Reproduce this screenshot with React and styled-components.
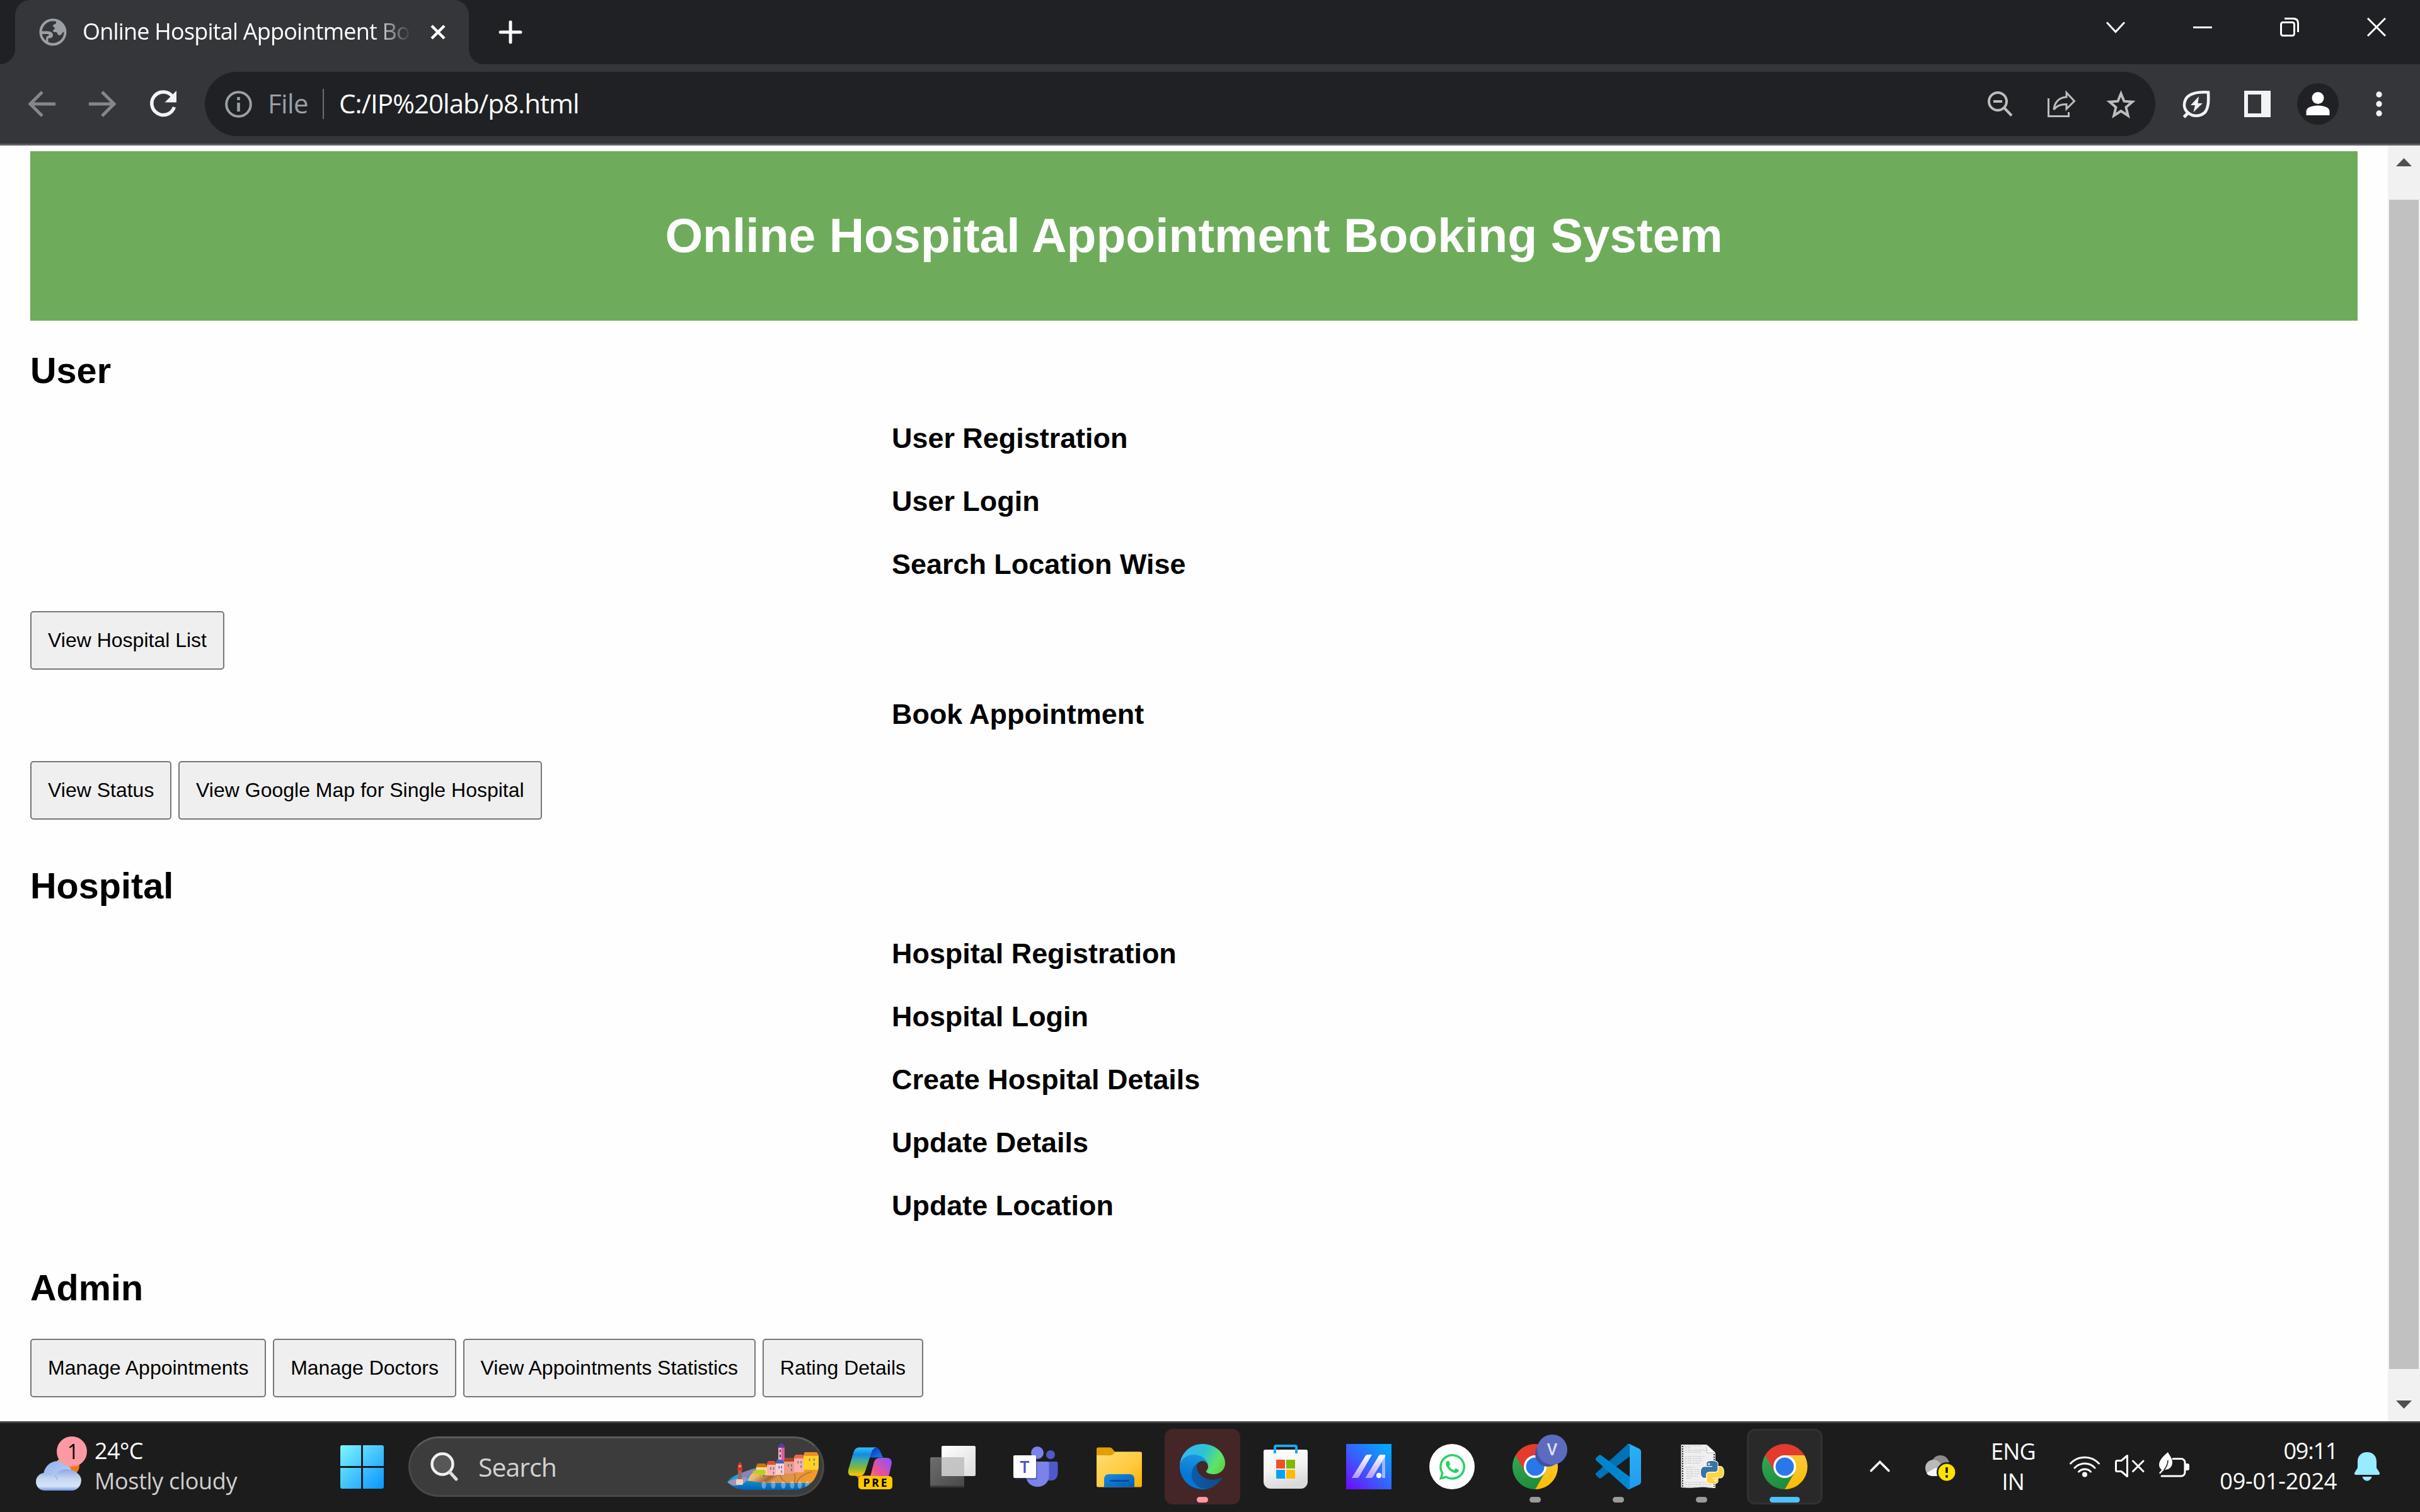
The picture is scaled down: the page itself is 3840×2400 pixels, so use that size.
import React from "react";
import styled, { createGlobalStyle } from "styled-components";
import { FaWhatsapp } from "react-icons/fa";

const GlobalStyle = createGlobalStyle`
  html, body { margin: 0; padding: 0; background: #fff; }
  * { box-sizing: border-box; }
  svg { display: block; flex: none; overflow: visible; }
`;

const uiFont = `"Open Sans", "Noto Sans", sans-serif`;
const pageFont = `"Liberation Sans", Arial, sans-serif`;

const Screen = styled.div`
  width: 3840px;
  height: 2400px;
  display: flex;
  flex-direction: column;
  overflow: hidden;
  background: #fff;
  font-family: ${uiFont};
`;

/* ---------- browser chrome ---------- */

const TitleBar = styled.header`
  height: 102px;
  flex: none;
  display: flex;
  background: #202124;
`;

const TabFoot = styled.div`
  width: 24px;
  display: flex;
  align-items: flex-end;
`;

const CurveSvg = styled.svg`
  background: #35363a;
`;

const Tab = styled.div`
  width: 720px;
  display: flex;
  align-items: center;
  padding: 0 36px 0 38px;
  background: #35363a;
  border-radius: 24px 24px 0 0;
`;

const TabTitle = styled.div`
  width: 520px;
  margin: 0 32px 0 25px;
  padding-bottom: 3px;
  font-size: 36px;
  line-height: 50px;
  letter-spacing: -0.8px;
  color: #fff;
  white-space: nowrap;
  mask-image: linear-gradient(to right, #000 458px, transparent 522px);
`;

const NewTab = styled.div`
  display: flex;
  align-items: center;
  padding-left: 24px;
`;

const WindowControls = styled.div`
  margin-left: auto;
  display: flex;
  gap: 108px;
  padding: 28px 54px 0 0;
`;

const Toolbar = styled.nav`
  height: 129px;
  flex: none;
  display: flex;
  align-items: center;
  padding: 0 60px 0 45px;
  background: #35363a;
  border-bottom: 3px solid #5f6065;
`;

const NavButtons = styled.div`
  display: flex;
  gap: 53px;
  margin-right: 45px;
`;

const Omnibox = styled.div`
  flex: 1;
  height: 102px;
  display: flex;
  align-items: center;
  padding: 0 32px;
  border-radius: 51px;
  background: #202124;
  font-size: 42px;
  line-height: 60px;
`;

const Scheme = styled.span`
  width: 112px;
  padding: 0 0 3px 25px;
  color: #9aa0a6;
  letter-spacing: -0.6px;
`;

const Divider = styled.span`
  width: 2px;
  height: 48px;
  background: #6b6e72;
`;

const Url = styled.span`
  flex: 1;
  padding: 0 0 3px 24px;
  color: #fff;
  letter-spacing: -0.95px;
`;

const OmniboxActions = styled.div`
  display: flex;
  align-items: center;
  & > svg + svg { margin-left: 55px; }
  & > svg + svg + svg { margin-left: 50px; }
`;

const ToolbarActions = styled.div`
  display: flex;
  align-items: center;
  margin-left: 44px;
`;

const Avatar = styled.div`
  width: 66px;
  height: 66px;
  margin: 0 59px 0 42px;
  display: grid;
  place-items: center;
  border-radius: 50%;
  background: #202124;
`;

const SidePanel = styled.div`
  width: 42px;
  height: 42px;
  margin-left: 53px;
  border: 6px solid #f1f3f4;
  border-right-width: 15px;
`;

/* ---------- page ---------- */

const Viewport = styled.div`
  flex: 1;
  min-height: 0;
  display: flex;
`;

const Page = styled.main`
  flex: 1;
  padding: 9px 48px 0;
  overflow: hidden;
  background: #fefefe;
  font-family: ${pageFont};
  color: #000;
`;

const Banner = styled.div`
  height: 269px;
  display: flex;
  align-items: center;
  justify-content: center;
  padding-bottom: 3px;
  background: #6eac5c;
`;

const BannerTitle = styled.h1`
  margin: 0;
  font-size: 76.8px;
  line-height: 88px;
  color: #fff;
`;

const Section = styled.section`
  margin-top: ${(p) => (p.$first ? 46 : 72)}px;
`;

const SectionTitle = styled.h2`
  margin: 0 0 ${(p) => (p.$tight ? 48 : 48)}px;
  font-size: 57.6px;
  line-height: 66px;
`;

const FormList = styled.div`
  display: flex;
  flex-direction: column;
  gap: 48px;
  padding-left: 1367px;
  margin-top: ${(p) => p.$top || 0}px;
`;

const FormTitle = styled.h3`
  margin: 0;
  font-size: 44.93px;
  line-height: 52px;
  padding-top: 1px;
  margin-bottom: -1px;
`;

const ButtonRow = styled.div`
  display: flex;
  gap: 10.7px;
  margin-top: ${(p) => p.$top || 0}px;
`;

const Button = styled.button`
  height: 93px;
  padding: 0 26px;
  border: 2px solid #767676;
  border-radius: 5px;
  background: #efefef;
  font-family: ${pageFont};
  font-size: 32px;
  color: #000;
`;

const Scrollbar = styled.div`
  width: 51px;
  display: flex;
  flex-direction: column;
  align-items: center;
  justify-content: space-between;
  background: #f1f1f1;
  padding: 20px 0;
`;

const Thumb = styled.div`
  width: 47px;
  height: 1856px;
  margin-bottom: -3px;
  background: #c1c1c1;
`;

/* ---------- taskbar ---------- */

const Taskbar = styled.footer`
  height: 144px;
  flex: none;
  display: flex;
  align-items: center;
  border-top: 3px solid #404040;
  padding-bottom: 3px;
  background: #1c1c1c;
  color: #fff;
`;

const Weather = styled.div`
  width: 514px;
  display: flex;
  align-items: center;
  padding-left: 57px;
`;

const WeatherIcon = styled.div`
  margin-right: 21px;
  padding-bottom: 2px;
`;

const Lines = styled.div`
  display: flex;
  flex-direction: column;
  align-items: ${(p) => p.$align || "flex-start"};
  padding-bottom: ${(p) => p.$lift || 0}px;
  font-size: 36px;
  line-height: 48px;
  white-space: nowrap;
`;

const Line = styled.span`
  letter-spacing: ${(p) => p.$spacing || 0}px;
  margin-right: ${(p) => p.$spacing || 0}px;
  color: ${(p) => (p.$muted ? "#cfcfcf" : "#fff")};
`;

const SearchBox = styled.div`
  width: 660px;
  height: 96px;
  margin: 0 12px 0 14px;
  display: flex;
  align-items: center;
  padding: 0 6px 0 32px;
  border: 3px solid #494949;
  border-top-color: #5a5a5a;
  border-radius: 48px;
  background: #3c3c3c;
`;

const SearchLabel = styled.span`
  flex: 1;
  padding-left: 31px;
  font-size: 41px;
  letter-spacing: -1px;
  color: #d2d2d2;
`;

const Apps = styled.div`
  display: flex;
  gap: 12px;
`;

const tileColors = { attention: "#442627", active: "#292929" };

const Tile = styled.div`
  width: 120px;
  height: 120px;
  display: flex;
  flex-direction: column;
  align-items: center;
  justify-content: space-between;
  padding: 24px 0 3px;
  border-radius: 13px;
  background: ${(p) => tileColors[p.$state] || "transparent"};
  box-shadow: ${(p) => (p.$state === "active" ? "inset 0 0 0 3px #313131" : "none")};
`;

const Indicator = styled.div`
  width: ${(p) => (p.$wide ? 48 : 18)}px;
  height: 9px;
  border-radius: 5px;
  background: ${(p) => p.$color};
`;

const StartSlot = styled.div`
  width: 120px;
  display: grid;
  place-items: center;
`;

const Tray = styled.div`
  margin-left: auto;
  display: flex;
  align-items: center;
  padding-right: 64px;
`;

const DriveSlot = styled.div`
  margin-left: 56px;
  padding-top: 4px;
`;

const LangBox = styled.div`
  width: 80px;
  margin: 0 50px 0 51px;
`;

const StatusIcons = styled.div`
  display: flex;
  align-items: center;
  gap: 24px;
  padding-bottom: 2px;
`;

const Clock = styled.div`
  width: 234px;
  margin-right: 28px;
`;

/* ---------- drawings ---------- */

const line = (color, w) => ({ fill: "none", stroke: color, strokeWidth: w });

const FootCurve = ({ side }) => (
  <CurveSvg width="24" height="24" viewBox="0 0 24 24">
    <path d={side === "left" ? "M0 0h24A24 24 0 0 1 0 24z" : "M24 0H0a24 24 0 0 0 24 24z"} fill="#202124" />
  </CurveSvg>
);

const Globe = () => (
  <svg width="44" height="44" viewBox="0 0 44 44">
    <circle cx="22" cy="22" r="19.5" {...line("#9aa0a6", 4)} />
    <path d="M27 3v4c0 3-5 2-5 5 0 2 3 2 3 4s-3 2-3 4 3 2 5 2 2 5 5 5c5 0 4-6 9-6C41 12 36 5 27 3z" fill="#9aa0a6" />
    <path d="M3 20.500h10c6 0 9 3 9 6s-2 5-6 5c-3 0-1 5-1 9l-3-1.500c-1-4-2-10 2-11 3-.5 2-3-2-3H3z" fill="#9aa0a6" />
  </svg>
);

const Back = ({ flip }) => (
  <svg width="43" height="42" viewBox="0 0 43 42">
    <path d="M43 21H4M22 2L3 21l19 19" {...line("#86878a", 5)} transform={flip ? "matrix(-1 0 0 1 43 0)" : undefined} />
  </svg>
);

const Reload = () => (
  <svg width="43" height="42" viewBox="0 0 43 42">
    <path d="M37 9.500A18.300 18.300 0 1 0 39.500 26" {...line("#f1f3f4", 5.5)} />
    <path d="M43 0v18.500H24.500z" fill="#f1f3f4" />
  </svg>
);

const Info = () => (
  <svg width="43" height="43" viewBox="0 0 43 43">
    <circle cx="21.5" cy="21.5" r="19.3" {...line("#9aa0a6", 4)} />
    <path d="M21.500 19v14M21.500 10v5" {...line("#9aa0a6", 4.6)} />
  </svg>
);

const ZoomOut = () => (
  <svg width="40" height="42" viewBox="0 0 40 42">
    <circle cx="16" cy="17" r="14" {...line("#bdbdbd", 4)} />
    <path d="M9 17h14M26 27l12 12.500" {...line("#bdbdbd", 4.2)} />
  </svg>
);

const Share = () => (
  <svg width="44" height="42" viewBox="0 0 44 42">
    <path d="M1.500 12v28.500h32V34" {...line("#bdbdbd", 3)} />
    <path d="M10 30C11 18 19 10.500 30 10V3l12.500 13.500L30 29v-7.500C21 21.500 14 24 10 30z" {...line("#bdbdbd", 3)} />
  </svg>
);

const Star = () => (
  <svg width="45" height="43" viewBox="0 0 45 43">
    <path d="M22.500 4.500l5 12.200 13 1-10 8.500 3.200 13.300-11.200-7.300-11.200 7.300 3.200-13.300-10-8.500 13-1z" {...line("#bdbdbd", 4)} />
  </svg>
);

const Leaf = () => (
  <svg width="44" height="43" viewBox="0 0 44 43">
    <path d="M40 2.500C22 1.500 10 4 4.500 13 0 22 2 30 8 35c8 7 20 6 27-1 6-8 5.500-20 5-31.500z" {...line("#f1f3f4", 4.6)} />
    <path d="M9 34l-7.500 8" {...line("#f1f3f4", 5)} />
    <path d="M25 9L12 23h7l-2.500 11L31 20h-7.500z" fill="#f1f3f4" />
  </svg>
);

const Person = () => (
  <svg width="40" height="38" viewBox="0 0 40 38">
    <circle cx="20" cy="9.500" r="9.500" fill="#fff" />
    <path d="M1.500 37V31c0-6 8-9.500 18.500-9.500S38.500 25 38.500 31v6z" fill="#fff" />
  </svg>
);

const Dots = () => (
  <svg width="10" height="42" viewBox="0 0 10 42">
    {[6, 21, 36].map((y) => <circle key={y} cx="5" cy={y} r="4.700" fill="#f1f3f4" />)}
  </svg>
);

const Cloud = () => (
  <svg width="72" height="90" viewBox="0 0 72 90">
    <defs>
      <linearGradient id="cloudBack" x1="0" y1="0" x2="0.500" y2="1">
        <stop offset="0" stopColor="#8fb0ee" /><stop offset="1" stopColor="#c8d9f3" />
      </linearGradient>
      <linearGradient id="cloudFront" x1="0" y1="0" x2="0" y2="1">
        <stop offset="0" stopColor="#8aa9e2" /><stop offset="0.450" stopColor="#c5d7f2" /><stop offset="0.800" stopColor="#d6e4f8" /><stop offset="1" stopColor="#7095e2" />
      </linearGradient>
    </defs>
    <circle cx="51" cy="44" r="18" fill="#f57712" />
    <path d="M34 36h6v12h-6z" fill="#f7b916" />
    <circle cx="35" cy="60" r="23" fill="url(#cloudBack)" />
    <path d="M14 84a14 14 0 0 1 0-28c7-1 13 2 16 6 2-7 9-12 18-12 13 0 24 9 24 17 0 10-7 17-15 17z" fill="url(#cloudFront)" />
    <path d="M30 60c2 2 3 4 4 7" {...line("#9ab5e6", 1.500)} />
    <circle cx="57" cy="22" r="24" fill="#ff99a4" />
    <text x="59" y="34" textAnchor="middle" fontFamily="Open Sans" fontSize="32" fill="#000">1</text>
  </svg>
);

const WindowsLogo = () => (
  <svg width="69" height="69" viewBox="0 0 69 69">
    <defs>
      <linearGradient id="win" gradientUnits="userSpaceOnUse" x1="0" y1="0" x2="69" y2="69">
        <stop offset="0" stopColor="#7df6ff" /><stop offset="0.500" stopColor="#44c5ff" /><stop offset="1" stopColor="#0a94ff" />
      </linearGradient>
    </defs>
    <path d="M3 0h30v33H0V3a3 3 0 0 1 3-3zM36 0h30a3 3 0 0 1 3 3v30H36zM0 36h33v33H3a3 3 0 0 1-3-3zM36 36h33v30a3 3 0 0 1-3 3H36z" fill="url(#win)" />
  </svg>
);

const SearchGlass = () => (
  <svg width="45" height="46" viewBox="0 0 45 46">
    <circle cx="19" cy="19" r="16.500" fill="#575757" stroke="#eef0f2" strokeWidth="4.500" />
    <path d="M31 32l10 11" {...line("#dadfe4", 5)} strokeLinecap="round" />
  </svg>
);

const houses = [
  [46, 38, 17, 12, "#ffd9a0", "#c9780f"], [63, 34, 15, 17, "#fbb6ac", "#e0502b"],
  [77, 32, 13, 18, "#f9cfd6", "#3d66b5"], [90, 29, 17, 19, "#ee9a87", "#a94a24"],
  [106, 24, 16, 22, "#fbb0a8", "#ee6a45"], [121, 20, 24, 22, "#ffd321", "#ec8f26"],
];

const Village = () => (
  <svg width="145" height="74" viewBox="0 0 145 74">
    <defs>
      <linearGradient id="sea" x1="0" y1="0" x2="0" y2="1">
        <stop offset="0" stopColor="#18b8e6" /><stop offset="1" stopColor="#0460b4" />
      </linearGradient>
      <linearGradient id="rock" x1="0" y1="0" x2="1" y2="0.300">
        <stop offset="0" stopColor="#f1ce92" /><stop offset="0.280" stopColor="#eab777" /><stop offset="0.480" stopColor="#a8622e" /><stop offset="0.560" stopColor="#d6904f" /><stop offset="1" stopColor="#f39a2c" />
      </linearGradient>
      <clipPath id="villageClip"><path d="M0 0h145v34c0 22-17 40-40 40H32C18 74 7 70 0 61z" /></clipPath>
    </defs>
    <g clipPath="url(#villageClip)">
      <path d="M0 61c5-6 13-12 24-13 40-4 80 10 121 8v18H0z" fill="url(#sea)" />
      <path d="M16 50c8-4 18-8 30-11v14H16z" fill="#8b82b5" />
      <path d="M0 62c8-6 20-8 31-9 3 6-5 14-22 14z" fill="#a791b3" />
      <path d="M31 59l8-11 16-4 35-4 30-4h26v27H58z" fill="url(#rock)" />
      <path d="M83 46c0 7 4 12 10 17M106 42c-2 8 5 10 0 21M134 45c-14 4-22 10-23 18" {...line("#c0702f", 1.800)} />
      <rect x="81" y="5" width="9" height="28" fill="#f4a9c4" />
      <rect x="86" y="5" width="5" height="28" fill="#df5d9b" />
      <path d="M80 7l2-4 4-4 4 4 2 4z" fill="#5a3ea0" />
      <path d="M84 10v4M84 18v4" {...line("#31467e", 2)} />
      {houses.map(([x, y, w, h, wall, roof]) => (
        <g key={x}>
          <rect x={x} y={y} width={w} height={h} fill={wall} />
          <path d={`M${x - 1} ${y}l3-6h${w - 5}l4 6z`} fill={roof} />
          <path d={`M${x + w * 0.4} ${y + 4}v4M${x + w * 0.7} ${y + 4}v4M${x + w * 0.7} ${y + 11}v4`} {...line("#4f74b8", 1.600)} />
        </g>
      ))}
      <ellipse cx="51" cy="46" rx="11" ry="4" fill="#bcd21a" />
      <rect x="17" y="42" width="6" height="16" fill="#9b6a5e" />
      <rect x="16" y="38" width="8" height="5" fill="#e3291d" />
      <rect x="17.500" y="34" width="5" height="4" fill="#c9a08d" />
      <path d="M20 29l3.500 6h-7z" fill="#f0311f" />
      <rect x="14" y="57" width="11" height="9" rx="2" fill="#ead6c3" />
      {[58, 73, 89, 103, 115, 127].map((x) => <ellipse key={x} cx={x} cy="66" rx="3.500" ry="6" fill="#fff" opacity="0.350" />)}
    </g>
  </svg>
);

const Copilot = () => (
  <svg width="72" height="72" viewBox="0 0 72 72">
    <defs>
      <linearGradient id="coA" x1="0" y1="0" x2="0" y2="1">
        <stop offset="0" stopColor="#35bdf8" /><stop offset="0.250" stopColor="#128ce4" /><stop offset="0.480" stopColor="#43ad9a" /><stop offset="0.720" stopColor="#85b832" /><stop offset="1" stopColor="#f8cb06" />
      </linearGradient>
      <linearGradient id="coB" x1="0" y1="1" x2="1" y2="0">
        <stop offset="0" stopColor="#ff8a60" /><stop offset="0.350" stopColor="#f0508d" /><stop offset="0.700" stopColor="#b153d4" /><stop offset="1" stopColor="#8f4bff" />
      </linearGradient>
      <linearGradient id="coC" x1="0" y1="0" x2="1" y2="1">
        <stop offset="0" stopColor="#0a2fae" /><stop offset="1" stopColor="#1685f2" />
      </linearGradient>
    </defs>
    <path d="M40 5.500h4c6 0 8 4 10 9l2 5c1 2 3 2 4 2H36z" fill="url(#coC)" />
    <path d="M12 50h30l-6 14-13-5c-6-3-5-7-11-9z" fill="#f15a49" />
    <path d="M20 5.500h29c-7 0-9 4-10.500 9L29 43c-2 6-5 7.500-9 7.500H8c-6 0-7-5-5.500-11l7.500-25c2-7 5-9 10-9z" fill="url(#coA)" />
    <path d="M53 22h10c7 0 9 5 7.500 11L65 56H36l6.500-26c1.500-5 4-8 10.500-8z" fill="url(#coB)" />
    <rect x="18" y="51" width="54" height="21" rx="5" fill="#ffc800" />
    <text x="45" y="68" textAnchor="middle" fontFamily="Open Sans" fontWeight="700" fontSize="17.500" letterSpacing="1" textLength="39" fill="#000">PRE</text>
  </svg>
);

const TaskView = () => (
  <svg width="72" height="72" viewBox="0 0 72 72">
    <defs>
      <linearGradient id="tv" x1="0" y1="0" x2="1" y2="1"><stop offset="0" stopColor="#fff" /><stop offset="1" stopColor="#dcdcdc" /></linearGradient>
      <linearGradient id="tg" x1="0" y1="0" x2="1" y2="1"><stop offset="0" stopColor="#6e6e6e" /><stop offset="1" stopColor="#484848" /></linearGradient>
    </defs>
    <rect x="0" y="21" width="54" height="48" rx="2" fill="url(#tg)" />
    <rect x="0" y="66" width="54" height="3" rx="1" fill="#3a3a3a" />
    <rect x="18" y="3" width="54" height="48" rx="2" fill="url(#tv)" />
    <path d="M18 21h36v30H18z" fill="#bdbdbd" opacity="0.850" />
  </svg>
);

const Teams = () => (
  <svg width="72" height="72" viewBox="0 0 72 72">
    <circle cx="59" cy="17" r="7" fill="#5059c9" />
    <path d="M52 28h16a2.500 2.500 0 0 1 2.500 2.500V46c0 8-5 12-10 12h-8.500z" fill="#5059c9" />
    <circle cx="38" cy="14" r="10" fill="#7b83eb" />
    <path d="M20 28h34a2.500 2.500 0 0 1 2.500 2.500V50c0 11-8 18-18 18S20 61 20 50z" fill="#7b83eb" />
    <rect x="2" y="20" width="36" height="37" rx="2" fill="#31366f" opacity="0.350" />
    <rect x="0" y="18" width="36" height="36" rx="2" fill="#fff" />
    <text x="18" y="46" textAnchor="middle" fontFamily="Open Sans" fontWeight="600" fontSize="27" fill="#4b53bc">T</text>
  </svg>
);

const Explorer = () => (
  <svg width="72" height="72" viewBox="0 0 72 72">
    <defs>
      <linearGradient id="fo" x1="0" y1="0" x2="1" y2="1"><stop offset="0" stopColor="#ffdc72" /><stop offset="0.600" stopColor="#ffc93c" /><stop offset="1" stopColor="#f5af00" /></linearGradient>
      <linearGradient id="fb" x1="0" y1="0" x2="1" y2="1"><stop offset="0" stopColor="#168fe4" /><stop offset="1" stopColor="#005bb5" /></linearGradient>
    </defs>
    <path d="M2.500 5.500H21c2 0 3 1 4 2l4 5h40v10H0V8a2.500 2.500 0 0 1 2.500-2.500z" fill="#e0a000" />
    <path d="M0 18h21c4 0 6-1.500 8-5.500h41a2 2 0 0 1 2 2V66a2.500 2.500 0 0 1-2.500 2.500h-67A2.500 2.500 0 0 1 0 66z" fill="url(#fo)" />
    <path d="M12 68.500V55a7 7 0 0 1 7-7h34a7 7 0 0 1 7 7v13.500z" fill="url(#fb)" />
    <path d="M22 58.500h28" {...line("#0a4b94", 3)} strokeLinecap="round" />
  </svg>
);

const Edge = () => (
  <svg width="72" height="72" viewBox="0 0 256 256">
    <defs>
      <linearGradient id="e1" x1="0.200" y1="0.500" x2="1" y2="0.600"><stop offset="0" stopColor="#0c59a4" /><stop offset="1" stopColor="#114a8b" /></linearGradient>
      <linearGradient id="e2" x1="0.600" y1="0" x2="0.400" y2="1"><stop offset="0" stopColor="#1b9de2" /><stop offset="0.300" stopColor="#1588da" /><stop offset="0.700" stopColor="#0078d7" /></linearGradient>
      <linearGradient id="e3" x1="0" y1="0.300" x2="1" y2="0.700"><stop offset="0" stopColor="#35b8f6" /><stop offset="0.450" stopColor="#2cc3d3" /><stop offset="0.800" stopColor="#5fe368" /><stop offset="1" stopColor="#59d34f" /></linearGradient>
    </defs>
    <path fill="url(#e1)" d="M231 190.500c-3.400 1.800-6.900 3.400-10.500 4.700-11.500 4.300-23.600 6.500-35.900 6.500-47.300 0-88.500-32.500-88.500-74.300.1-11.400 6.400-21.900 16.400-27.300-42.800 1.800-53.800 46.400-53.800 72.500 0 73.900 68.100 81.400 82.800 81.400 7.900 0 19.800-2.300 27-4.600l1.300-.4c27.600-9.500 51-28.100 66.600-52.800 1.200-1.900.6-4.300-1.200-5.500-1.300-.8-2.900-.9-4.200-.2z" />
    <path fill="url(#e2)" d="M105.700 241.400c-8.900-5.500-16.600-12.800-22.700-21.300-26.300-36-18.400-86.500 17.600-112.800 3.800-2.700 7.700-5.200 11.900-7.200 3.100-1.500 8.400-4.100 15.500-4 10.100.1 19.600 4.900 25.700 13 4 5.400 6.300 11.900 6.400 18.700 0-.2 24.500-79.600-80-79.600-43.900 0-80 41.700-80 78.200-.2 19.300 4 38.500 12.100 56 27.600 58.800 94.800 87.600 156.400 67.100-21.100 6.600-44.100 3.700-62.900-8.100z" />
    <path fill="url(#e3)" d="M152.300 148.900c-.8 1-3.300 2.500-3.300 5.700 0 2.600 1.700 5.100 4.700 7.200 14.400 10 41.500 8.700 41.600 8.700 10.700 0 21.100-2.900 30.300-8.300 18.800-11 30.400-31.100 30.400-52.900.3-22.400-8-37.300-11.300-43.900C223.500 23.900 177.700 0 128 0 58 0 1 56.200 0 126.200c.5-36.500 36.800-66 80-66 3.500 0 23.500.3 42 10.100 16.300 8.600 24.900 18.900 30.800 29.200 6.200 10.700 7.300 24.100 7.300 29.500 0 5.300-2.700 13.300-7.800 19.900z" />
  </svg>
);

const Store = () => (
  <svg width="72" height="72" viewBox="0 0 72 72">
    <defs>
      <linearGradient id="st" x1="0" y1="0" x2="0.300" y2="1"><stop offset="0" stopColor="#fff" /><stop offset="0.500" stopColor="#f5f5f5" /><stop offset="1" stopColor="#dadada" /></linearGradient>
    </defs>
    <path d="M4 9h64a3 3 0 0 1 3 3v48a11 11 0 0 1-11 11H12A11 11 0 0 1 1 60V12a3 3 0 0 1 3-3z" fill="url(#st)" />
    <path d="M19 15V5a2 2 0 0 1 2-2h30a2 2 0 0 1 2 2v10" {...line("#1ba8ee", 4)} />
    <path d="M21 25h14v14H21z" fill="#f44f24" />
    <path d="M37 25h14v14H37z" fill="#80b900" />
    <path d="M21 41h14v14H21z" fill="#00a3f3" />
    <path d="M37 41h14v14H37z" fill="#ffb900" />
  </svg>
);

const MyAsus = () => (
  <svg width="72" height="72" viewBox="0 0 72 72">
    <defs>
      <linearGradient id="as" x1="0" y1="1" x2="1" y2="0"><stop offset="0.050" stopColor="#6b10ff" /><stop offset="0.450" stopColor="#3a5cff" /><stop offset="0.900" stopColor="#04a4ff" /></linearGradient>
      <linearGradient id="am" x1="0" y1="0" x2="0" y2="1"><stop offset="0" stopColor="#fff" /><stop offset="1" stopColor="#b59cff" /></linearGradient>
    </defs>
    <path d="M0 0h72v72H0z" fill="url(#as)" />
    <path d="M31 18.500l2-1.500h8L20 53l-2 1H9z" fill="url(#am)" />
    <path d="M57 28l5-8v34h-5z" fill="#a6b6ff" />
    <path d="M52 18.500l2-1.500h8v3L42 53l-2 1h-9.500z" fill="url(#am)" />
    <circle cx="52" cy="50" r="4.200" fill="#fff" />
  </svg>
);

const Disc = styled.div`
  width: 72px;
  height: 72px;
  display: grid;
  place-items: center;
  border-radius: 50%;
  background: #fff;
  color: #25d366;
`;

const Chrome = ({ badge }) => (
  <svg width="72" height="72" viewBox="0 0 72 72">
    <defs>
      <linearGradient id="cg" x1="0" y1="0" x2="0.300" y2="1"><stop offset="0" stopColor="#34a853" /><stop offset="1" stopColor="#1e8e3e" /></linearGradient>
      <linearGradient id="cy" x1="0" y1="0" x2="0" y2="1"><stop offset="0" stopColor="#fcc934" /><stop offset="1" stopColor="#fbbc04" /></linearGradient>
    </defs>
    <path d="M36 36L4.800 18A36 36 0 0 0 36 72l15.600-27z" fill="url(#cg)" />
    <path d="M36 18h31.200A36 36 0 0 1 36 72l15.600-27z" fill="url(#cy)" />
    <path d="M36 18h31.200A36 36 0 0 0 4.800 18l15.600 27z" fill="#e33b2e" />
    <circle cx="36" cy="36" r="18" fill="#fff" />
    <circle cx="36" cy="36" r="14.500" fill="#2878ea" />
    {badge && (
      <>
        <circle cx="56" cy="16" r="20" fill="#4450a0" />
        <circle cx="63" cy="9" r="24" fill="#5c6bc0" />
        <text x="63" y="18" textAnchor="middle" fontFamily="Roboto" fontWeight="500" fontSize="26" fill="#dcdff2">{badge}</text>
      </>
    )}
  </svg>
);

const VsCode = () => (
  <svg width="72" height="72" viewBox="0 0 100 100">
    <defs>
      <linearGradient id="vr" x1="0" y1="0" x2="0" y2="1"><stop offset="0" stopColor="#2bb1f2" /><stop offset="1" stopColor="#1f9bf0" /></linearGradient>
    </defs>
    <path fill="#0072b5" d="M96.460 10.800L75.860.88a6.200 6.200 0 0 0-7.100 1.200L1.300 63.600a4.170 4.170 0 0 0 0 6.160l5.500 5a4.170 4.170 0 0 0 5.330.24L75 27.300V10z" />
    <path fill="#0086d1" d="M96.460 89.200L75.860 99.120a6.200 6.200 0 0 1-7.100-1.200L1.300 36.400a4.170 4.170 0 0 1 0-6.160l5.500-5a4.170 4.170 0 0 1 5.330-.24L75 72.700V90z" />
    <path fill="url(#vr)" d="M75.860 99.130a6.230 6.230 0 0 1-7.100-1.200A3.670 3.670 0 0 0 75 95.330V4.670A3.670 3.670 0 0 0 68.760 2.070a6.220 6.220 0 0 1 7.100-1.210l20.600 9.900A6.250 6.250 0 0 1 100 16.400v67.200a6.250 6.250 0 0 1-3.540 5.630z" />
  </svg>
);

const snake =
  "M14.25.18l.9.2.73.26.59.3.45.32.34.34.25.34.16.33.1.3.04.26.02.2-.01.13V8.500l-.05.63-.13.55-.21.46-.26.38-.3.31-.33.25-.35.19-.35.14-.33.1-.3.07-.26.04-.21.02H8.770l-.69.05-.59.14-.5.22-.41.27-.33.32-.27.35-.2.36-.15.37-.1.35-.07.32-.04.27-.02.21v3.060H3.170l-.21-.03-.28-.07-.32-.12-.35-.18-.36-.26-.36-.36-.35-.46-.32-.59-.28-.73-.21-.88-.14-1.050-.05-1.230.06-1.220.16-1.040.24-.87.32-.71.36-.57.4-.44.42-.33.42-.24.4-.16.36-.1.32-.05.24-.01h.16l.06.01h8.160v-.83H6.180l-.01-2.750-.02-.37.05-.34.11-.31.17-.28.25-.26.31-.23.38-.2.44-.18.51-.15.58-.12.64-.1.71-.06.77-.04.84-.02 1.270.05z";

const codeRows = [[8, 30, 3], [9, 9, 6], [9, 40, 10], [9, 26, 13], [9, 32, 20], [9, 28, 23.5], [9, 30, 27], [9, 24, 30.5], [10, 15, 37], [12, 22, 40.5], [12, 20, 44], [12, 21, 47.5], [12, 18, 51], [12, 7, 54.5], [9, 40, 61], [9, 42, 64.5], [9, 38, 68]];

const PythonFile = () => (
  <svg width="72" height="72" viewBox="0 0 72 72">
    <path d="M3.500 1H44l14 14v55c-8 0-12-1-18-1.500S20 71 3.500 69z" fill="#efefef" />
    <path d="M44 1v13h14z" fill="#fbfbfb" stroke="#bdbdbd" strokeWidth="1" />
    <path d="M6 3v65" {...line("#222", 2)} strokeDasharray="2 1.900" />
    <path d="M56 16v52" {...line("#222", 2)} strokeDasharray="2 1.900" />
    {codeRows.map(([x, w, y]) => <path key={y} d={`M${x} ${y}h${w}`} {...line("#c6c6c6", 1.2)} strokeDasharray="4 1 6 1.500 3 1" />)}
    <g transform="translate(35 27) scale(1.490)">
      <path d={snake} fill="#3873a5" stroke="#fff" strokeWidth="1.400" paintOrder="stroke" />
      <path d={snake} fill="#ffd43e" stroke="#fff" strokeWidth="1.400" paintOrder="stroke" transform="rotate(180 12 12)" />
      <circle cx="8.600" cy="3.200" r="1.100" fill="#fff" />
      <circle cx="15.400" cy="20.800" r="1.100" fill="#fff" />
    </g>
  </svg>
);

const TrayChevron = () => (
  <svg width="32" height="18" viewBox="0 0 32 18"><path d="M2 15.500L16 1.500l14 14" {...line("#fff", 3.6)} strokeLinecap="round" /></svg>
);

const OneDrive = () => (
  <svg width="48" height="48" viewBox="0 0 48 48">
    <circle cx="24" cy="18" r="14" fill="#8c8c8c" />
    <circle cx="13" cy="24" r="13" fill="#b9b9b9" />
    <path d="M2 32l14-8 16 3v10H14C7 37 3 35 2 32z" fill="#f6f6f6" />
    <circle cx="34" cy="31" r="16" fill="#1c1c1c" />
    <circle cx="34" cy="31" r="13.500" fill="#fde100" />
    <path d="M34 23v9M34 35.500v4" {...line("#1c1c1c", 3.6)} />
  </svg>
);

const Wifi = () => (
  <svg width="48" height="36" viewBox="0 0 48 36">
    <path d="M1.500 14a31 31 0 0 1 45 0M8 21a22 22 0 0 1 32 0M14.500 27a13.500 13.500 0 0 1 19 0" {...line("#fff", 3)} strokeLinecap="round" />
    <circle cx="24" cy="31.500" r="4" fill="#fff" />
  </svg>
);

const Muting = () => (
  <svg width="46" height="36" viewBox="0 0 46 36">
    <path d="M1.500 11.500a2 2 0 0 1 2-2H10l9.500-8v33l-9.500-8H3.500a2 2 0 0 1-2-2z" {...line("#fff", 3)} strokeLinejoin="round" />
    <path d="M28.500 10L45 26.500M45 10L28.500 26.500" {...line("#fff", 3)} strokeLinecap="round" />
  </svg>
);

const Battery = () => (
  <svg width="48" height="42" viewBox="0 0 48 42">
    <path d="M22 9.500h13a6 6 0 0 1 6 6V31a6 6 0 0 1-6 6H4" {...line("#fff", 3)} strokeLinecap="round" />
    <path d="M42 17h3a3 3 0 0 1 3 3v5a3 3 0 0 1-3 3h-3z" fill="#fff" />
    <path d="M14-1C6 6 0 12 0 19c0 4 2 6 4 8l-4 5 1.500 1.500L8 27c8 0 13-4 13-12 0-6-4-10-7-16z" fill="#fff" />
    <path d="M14 12c0 6-2 10-6 15" {...line("#1c1c1c", 1.500)} />
  </svg>
);

const Bell = () => (
  <svg width="40" height="46" viewBox="0 0 40 46">
    <path d="M20 0C11 0 5 6 5 15v10L.5 32c-1.500 2.500 0 4 2 4h35c2 0 3.500-1.500 2-4L35 25V15C35 6 29 0 20 0zM12.500 39h15c-1 4-4 6.500-7.500 6.500S13.500 43 12.500 39z" fill="#99ebff" />
  </svg>
);

/* ---------- content ---------- */

const apps = [
  { icon: <Copilot /> },
  { icon: <TaskView /> },
  { icon: <Teams /> },
  { icon: <Explorer /> },
  { icon: <Edge />, state: "attention", mark: "#ff99a4" },
  { icon: <Store /> },
  { icon: <MyAsus /> },
  { icon: <Disc><FaWhatsapp size={47} /></Disc> },
  { icon: <Chrome badge="V" />, mark: "#9a9a9a" },
  { icon: <VsCode />, mark: "#9a9a9a" },
  { icon: <PythonFile />, mark: "#9a9a9a" },
  { icon: <Chrome />, state: "active", mark: "#4cc2ff", wide: true },
];

const Forms = ({ items, top }) => (
  <FormList $top={top}>
    {items.map((t) => <FormTitle key={t}>{t}</FormTitle>)}
  </FormList>
);

const Buttons = ({ items, top }) => (
  <ButtonRow $top={top}>
    {items.map((t) => <Button key={t}>{t}</Button>)}
  </ButtonRow>
);

export default function App() {
  return (
    <Screen>
      <GlobalStyle />
      <TitleBar>
        <TabFoot><FootCurve side="left" /></TabFoot>
        <Tab>
          <Globe />
          <TabTitle>Online Hospital Appointment Bo</TabTitle>
          <svg width="24" height="24" viewBox="0 0 24 24"><path d="M2 2l20 20M22 2L2 22" {...line("#fff", 4.5)} /></svg>
        </Tab>
        <TabFoot><FootCurve side="right" /></TabFoot>
        <NewTab>
          <svg width="36" height="36" viewBox="0 0 36 36"><path d="M18 2v32M2 18h32" {...line("#fff", 5)} strokeLinecap="round" /></svg>
        </NewTab>
        <WindowControls>
          <svg width="30" height="30" viewBox="0 0 30 30"><path d="M1 7.500l14 15 14-15" {...line("#fff", 3)} /></svg>
          <svg width="30" height="30" viewBox="0 0 30 30"><path d="M0 15.500h30" {...line("#fff", 3)} /></svg>
          <svg width="30" height="30" viewBox="0 0 30 30">
            <rect x="1.500" y="7.500" width="21" height="21" rx="3" {...line("#fff", 3)} />
            <path d="M7 1.500h14c5 0 7.500 3 7.500 7.500v14" {...line("#fff", 3)} />
          </svg>
          <svg width="30" height="30" viewBox="0 0 30 30"><path d="M1 1l28 28M29 1L1 29" {...line("#fff", 3)} /></svg>
        </WindowControls>
      </TitleBar>

      <Toolbar>
        <NavButtons><Back /><Back flip /><Reload /></NavButtons>
        <Omnibox>
          <Info />
          <Scheme>File</Scheme>
          <Divider />
          <Url>C:/IP%20lab/p8.html</Url>
          <OmniboxActions><ZoomOut /><Share /><Star /></OmniboxActions>
        </Omnibox>
        <ToolbarActions>
          <Leaf />
          <SidePanel />
          <Avatar><Person /></Avatar>
          <Dots />
        </ToolbarActions>
      </Toolbar>

      <Viewport>
        <Page>
          <Banner><BannerTitle>Online Hospital Appointment Booking System</BannerTitle></Banner>
          <Section $first>
            <SectionTitle>User</SectionTitle>
            <Forms items={["User Registration", "User Login", "Search Location Wise"]} />
            <Buttons items={["View Hospital List"]} top={49} />
            <Forms items={["Book Appointment"]} top={44} />
            <Buttons items={["View Status", "View Google Map for Single Hospital"]} top={49} />
          </Section>
          <Section>
            <SectionTitle>Hospital</SectionTitle>
            <Forms items={["Hospital Registration", "Hospital Login", "Create Hospital Details", "Update Details", "Update Location"]} />
          </Section>
          <Section>
            <SectionTitle>Admin</SectionTitle>
            <Buttons items={["Manage Appointments", "Manage Doctors", "View Appointments Statistics", "Rating Details"]} />
          </Section>
        </Page>
        <Scrollbar>
          <svg width="25" height="13" viewBox="0 0 25 13"><path d="M0 13L12.500 0 25 13z" fill="#505050" /></svg>
          <Thumb />
          <svg width="25" height="13" viewBox="0 0 25 13"><path d="M0 0l12.500 13L25 0z" fill="#505050" /></svg>
        </Scrollbar>
      </Viewport>

      <Taskbar>
        <Weather>
          <WeatherIcon><Cloud /></WeatherIcon>
          <Lines $lift={3}>
            <Line $spacing={-0.6}>24°C</Line>
            <Line $muted $spacing={-0.35}>Mostly cloudy</Line>
          </Lines>
        </Weather>
        <StartSlot><WindowsLogo /></StartSlot>
        <SearchBox>
          <SearchGlass />
          <SearchLabel>Search</SearchLabel>
          <Village />
        </SearchBox>
        <Apps>
          {apps.map((a, i) => (
            <Tile key={i} $state={a.state}>
              {a.icon}
              {a.mark && <Indicator $color={a.mark} $wide={a.wide} />}
            </Tile>
          ))}
        </Apps>
        <Tray>
          <TrayChevron />
          <DriveSlot><OneDrive /></DriveSlot>
          <LangBox>
            <Lines $align="center"><Line $spacing={-0.8}>ENG</Line><Line $spacing={-0.8}>IN</Line></Lines>
          </LangBox>
          <StatusIcons><Wifi /><Muting /><Battery /></StatusIcons>
          <Clock>
            <Lines $align="flex-end" $lift={3}><Line $spacing={-1.2}>09:11</Line><Line $spacing={-0.2}>09-01-2024</Line></Lines>
          </Clock>
          <Bell />
        </Tray>
      </Taskbar>
    </Screen>
  );
}
